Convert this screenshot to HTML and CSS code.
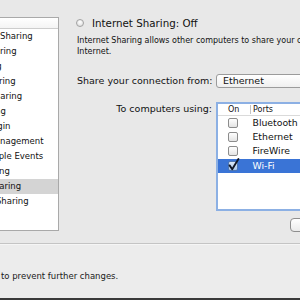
FILE: index.html
```html
<!DOCTYPE html>
<html>
<head>
<meta charset="utf-8">
<link rel="stylesheet" href="styles.css">
</head>
<body>
<div class="window">
  <div class="main">
    <div class="services">
      <div class="svc-head"><span class="svc-head-on">On</span><span class="svc-head-name">Service</span></div>
      <ul class="svc-list">
        <li class="svc"><span class="svc-check"></span><span class="svc-name">DVD or CD Sharing</span></li>
        <li class="svc"><span class="svc-check"></span><span class="svc-name">Screen Sharing</span></li>
        <li class="svc"><span class="svc-check"></span><span class="svc-name">File Sharing</span></li>
        <li class="svc"><span class="svc-check"></span><span class="svc-name">Printer Sharing</span></li>
        <li class="svc"><span class="svc-check"></span><span class="svc-name">Scanner Sharing</span></li>
        <li class="svc"><span class="svc-check"></span><span class="svc-name">Web Sharing</span></li>
        <li class="svc"><span class="svc-check"></span><span class="svc-name">Remote Login</span></li>
        <li class="svc"><span class="svc-check"></span><span class="svc-name">Remote Management</span></li>
        <li class="svc"><span class="svc-check"></span><span class="svc-name">Remote Apple Events</span></li>
        <li class="svc"><span class="svc-check"></span><span class="svc-name">Xgrid Sharing</span></li>
        <li class="svc svc-selected"><span class="svc-check"></span><span class="svc-name">Internet Sharing</span></li>
        <li class="svc"><span class="svc-check"></span><span class="svc-name">Bluetooth Sharing</span></li>
      </ul>
    </div>
    <div class="pane">
      <div class="status"><span class="radio"></span><span class="status-text">Internet Sharing: Off</span></div>
      <p class="desc">Internet Sharing allows other computers to share your connection to the<br>Internet.</p>
      <div class="form">
        <span class="form-label">Share your connection from:</span>
        <div class="popup">Ethernet</div>
        <span class="form-label label-top">To computers using:</span>
        <div class="ports">
          <div class="ports-head"><span class="col-on">On</span><span class="col-name head-name">Ports</span></div>
          <div class="port-row"><span class="col-on"><span class="checkbox"></span></span><span class="col-name">Bluetooth</span></div>
          <div class="port-row"><span class="col-on"><span class="checkbox"></span></span><span class="col-name">Ethernet</span></div>
          <div class="port-row"><span class="col-on"><span class="checkbox"></span></span><span class="col-name">FireWire</span></div>
          <div class="port-row port-selected"><span class="col-on"><span class="checkbox checked"><svg class="check" width="13" height="13" viewBox="0 0 13 13"><path d="M2.6 7.4 L5.2 11.2 L11.4 1" fill="none" stroke="#111827" stroke-width="1.9" stroke-linecap="round" stroke-linejoin="round"/></svg></span></span><span class="col-name">Wi-Fi</span></div>
        </div>
        <div class="btn-cell"><button class="btn">Wi-Fi Options…</button></div>
      </div>
    </div>
  </div>
  <div class="footer"><span class="lock-text">Click the lock to prevent further changes.</span></div>
  <div class="bottom-edge"></div>
</div>
</body>
</html>
```
FILE: styles.css
```css
* { box-sizing: border-box; }
html, body {
  margin: 0;
  width: 300px;
  height: 300px;
  overflow: hidden;
  background: #e8e8e8;
  font-family: "DejaVu Sans", sans-serif;
  color: #111;
}
.window {
  display: flex;
  flex-direction: column;
  height: 300px;
}
.main {
  height: 244px;
  padding-top: 17px;
  display: flex;
  border-bottom: 1px solid #c4c4c4;
  flex: none;
}
.services {
  flex: none;
  width: 160px;
  margin-left: -101px;
  height: 214px;
  background: #fff;
  border: 1px solid #a9a9a9;
}
.svc-head {
  height: 11px;
  border-bottom: 1px solid #cdcdcd;
  background: linear-gradient(#ffffff, #f4f4f4);
  display: flex;
  font-size: 7px;
  line-height: 10px;
  white-space: nowrap;
}
.svc-head-on { width: 40px; padding-left: 18px; }
.svc-head-name { padding-left: 12px; }
.svc-list {
  list-style: none;
  margin: 0;
  padding: 0;
}
.svc {
  height: 15px;
  display: flex;
  align-items: center;
  padding-left: 20px;
  font-size: 8.5px;
  line-height: 15px;
  white-space: nowrap;
}
.svc-check {
  width: 10px;
  height: 10px;
  border: 1px solid #8e8e8e;
  border-radius: 2px;
  margin-right: 22px;
  flex: none;
}
.svc-selected { background: #d4d4d4; }
.pane {
  flex: none;
  width: 420px;
  padding-left: 17px;
  display: flex;
  flex-direction: column;
}
.status {
  display: flex;
  align-items: center;
  gap: 8px;
  height: 12px;
}
.radio {
  width: 8px;
  height: 8px;
  border-radius: 50%;
  border: 1px solid #a2a2a2;
  background: radial-gradient(circle at 50% 35%, #ffffff, #d8d8d8);
  flex: none;
}
.status-text {
  font-size: 10.3px;
  line-height: 12px;
  white-space: nowrap;
}
.desc {
  margin: 5.5px 0 0 1px;
  font-size: 8px;
  line-height: 11.4px;
  white-space: nowrap;
}
.form {
  margin: 16.7px 0 0 1px;
  display: grid;
  grid-template-columns: 135px 160px;
  column-gap: 4px;
}
.form-label {
  font-size: 9.5px;
  line-height: 12px;
  text-align: right;
  align-self: center;
  white-space: nowrap;
}
.label-top {
  align-self: start;
  margin-top: 15.3px;
}
.popup {
  height: 14px;
  border: 1px solid #9b9b9b;
  border-radius: 3px;
  background: linear-gradient(#ffffff, #efefef);
  padding-left: 6px;
  font-size: 9.5px;
  line-height: 12px;
}
.ports {
  margin-top: 13.5px;
  height: 109px;
  border: 2px solid #8cb0e4;
  background: #fff;
}
.ports-head {
  height: 12px;
  border-bottom: 1px solid #dadada;
  display: flex;
  align-items: center;
  font-size: 8px;
  line-height: 11px;
}
.col-on {
  width: 32px;
  padding-left: 10px;
  flex: none;
  display: flex;
  align-items: center;
}
.col-name {
  padding-left: 2.5px;
  white-space: nowrap;
}
.head-name {
  border-left: 1px solid #c4c4c4;
  line-height: 9px;
  padding-left: 2px;
}
.port-row {
  height: 14.4px;
  display: flex;
  align-items: center;
  font-size: 9.3px;
  line-height: 14px;
}
.port-selected {
  background: #3a74d6;
  color: #fff;
}
.checkbox {
  position: relative;
  width: 10px;
  height: 10px;
  border: 1px solid #8c8c8c;
  border-radius: 2px;
  background: linear-gradient(#ffffff, #e4e4e4);
  display: block;
}
.checkbox.checked {
  border-color: #4e77b3;
  background: linear-gradient(#dbe8f8, #a9c8ee);
}
.check {
  position: absolute;
  left: -2px;
  top: -4px;
  overflow: visible;
}
.btn-cell {
  grid-column: 2;
  margin-top: 7px;
  padding-left: 74px;
}
.btn {
  display: block;
  height: 14px;
  border: 1px solid #8e8e8e;
  border-radius: 4px;
  background: linear-gradient(#ffffff, #ebebeb);
  padding: 0 12px;
  font-family: "DejaVu Sans", sans-serif;
  font-size: 9.5px;
  line-height: 12px;
  white-space: nowrap;
  color: #111;
}
.footer {
  flex: none;
  height: 54px;
  background: #ececec;
  border-top: 1px solid #f5f5f5;
  padding-top: 25px;
  font-size: 8.5px;
  line-height: 12px;
  white-space: nowrap;
}
.lock-text {
  display: block;
  margin-left: -58.5px;
  color: #1a1a1a;
}
.bottom-edge {
  flex: none;
  height: 2px;
  background: #3a3a3a;
}
```
